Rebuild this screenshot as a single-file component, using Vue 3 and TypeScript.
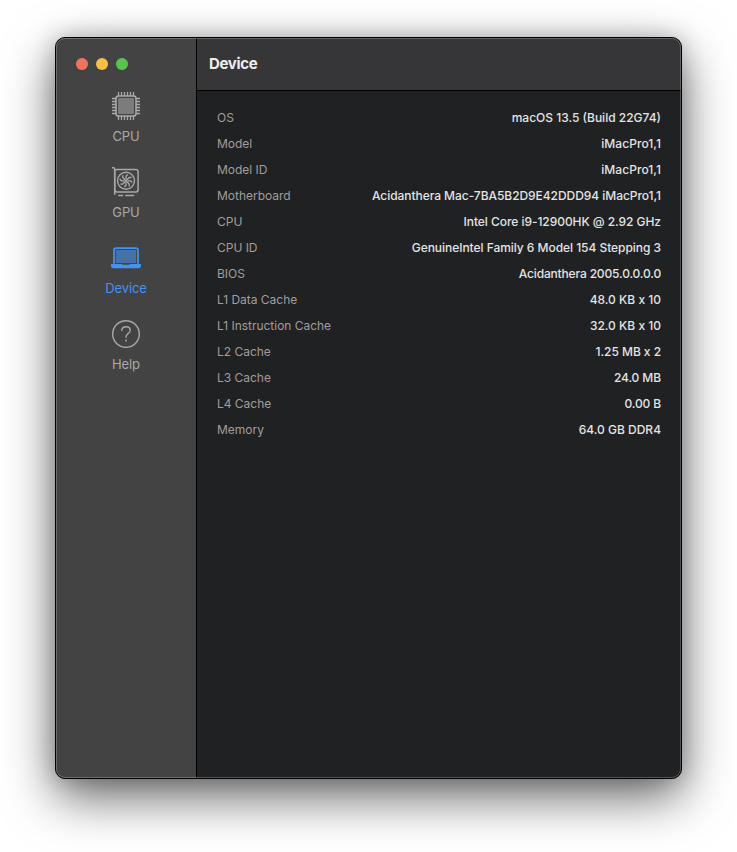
<script setup lang="ts">
interface InfoRow {
  label: string
  value: string
  tracking: number
}
type IconName = 'cpu' | 'gpu' | 'device' | 'help'
interface NavItem {
  icon: IconName
  label: string
}

const nav: NavItem[] = [
  { icon: 'cpu', label: 'CPU' },
  { icon: 'gpu', label: 'GPU' },
  { icon: 'device', label: 'Device' },
  { icon: 'help', label: 'Help' },
]
const active: IconName = 'device'

const rows: InfoRow[] = [
  { label: 'OS', value: 'macOS 13.5 (Build 22G74)', tracking: 0 },
  { label: 'Model', value: 'iMacPro1,1', tracking: 0.05 },
  { label: 'Model ID', value: 'iMacPro1,1', tracking: 0.05 },
  { label: 'Motherboard', value: 'Acidanthera Mac-7BA5B2D9E42DDD94 iMacPro1,1', tracking: -0.05 },
  { label: 'CPU', value: 'Intel Core i9-12900HK @ 2.92 GHz', tracking: -0.05 },
  { label: 'CPU ID', value: 'GenuineIntel Family 6 Model 154 Stepping 3', tracking: -0.045 },
  { label: 'BIOS', value: 'Acidanthera 2005.0.0.0.0', tracking: -0.16 },
  { label: 'L1 Data Cache', value: '48.0 KB x 10', tracking: 0 },
  { label: 'L1 Instruction Cache', value: '32.0 KB x 10', tracking: 0 },
  { label: 'L2 Cache', value: '1.25 MB x 2', tracking: -0.05 },
  { label: 'L3 Cache', value: '24.0 MB', tracking: -0.1 },
  { label: 'L4 Cache', value: '0.00 B', tracking: -0.12 },
  { label: 'Memory', value: '64.0 GB DDR4', tracking: 0 },
]

const pins: number[] = [9.5, 12.5, 15.5, 18.5, 21.5, 24.5]
const blades: number[] = [0, 45, 90, 135, 180, 225, 270, 315]
</script>

<template>
  <div class="desktop">
    <main class="window">
      <aside class="sidebar">
        <div class="lights">
          <span class="light close"></span>
          <span class="light minimize"></span>
          <span class="light zoom"></span>
        </div>
        <nav class="nav">
          <a v-for="item in nav" :key="item.icon" class="item" :class="{ active: item.icon === active }">
            <svg class="icon" viewBox="0 0 34 34" width="34" height="34" fill="none" stroke="currentColor">
              <g v-if="item.icon === 'cpu'">
                <g stroke-width="1.3">
                  <path v-for="p in pins.slice(0, 6)" :key="p" :d="`M3 ${p}h4M27 ${p}h4`" />
                  <path v-for="p in pins" :key="`v${p}`" :d="`M${p} 3v4M${p} 27v4`" />
                </g>
                <rect x="7" y="7" width="20" height="20" rx="2.6" stroke-width="1.6" />
                <rect x="9" y="9" width="16" height="16" rx=".8" fill="#7c7c7e" stroke="none" />
              </g>
              <g v-else-if="item.icon === 'gpu'" stroke-width="1.5">
                <path d="M3 2.8h1.4q1.3 0 1.3 1.3v25.6" />
                <rect x="5.7" y="4.5" width="23.4" height="22.4" rx="2.2" />
                <circle cx="17" cy="15.8" r="8.5" stroke-width="1.4" />
                <circle cx="17" cy="15.8" r="1.3" fill="currentColor" stroke="none" />
                <path
                  v-for="b in blades"
                  :key="b"
                  d="M17 14.4v-3.2l1.7-1.7"
                  stroke-width="1.35"
                  :transform="`rotate(${b} 17 15.8)`"
                />
                <path d="M9.2 30.4h5M16.4 30.4h8.8" stroke-width="1.5" />
              </g>
              <g v-else-if="item.icon === 'device'">
                <path d="M5 22.8V9.2a2 2 0 0 1 2-2h20a2 2 0 0 1 2 2v13.6" stroke-width="1.7" />
                <rect x="6.8" y="8.9" width="20.4" height="13.2" rx=".5" fill="#4770a6" stroke="none" />
                <path
                  d="M2 23h10.8q.2.7 1 .7h6.4q.8 0 1-.7H32v1.5q0 2.7-2.8 2.7H4.8Q2 27.2 2 24.5z"
                  fill="currentColor"
                  stroke="none"
                />
              </g>
              <g v-else stroke-width="1.4" stroke-linecap="round">
                <circle cx="17" cy="17" r="13.3" />
                <path d="M12.8 13.5c.1-2.4 1.8-3.8 4.2-3.8s4.2 1.5 4.2 3.6c0 1.5-.8 2.4-2.1 3.3-1.5 1-2 1.7-2 3v.6" />
                <circle cx="17" cy="23.6" r="1" fill="currentColor" stroke="none" />
              </g>
            </svg>
            <span class="caption">{{ item.label }}</span>
          </a>
        </nav>
      </aside>
      <section class="content">
        <header class="titlebar"><h1 class="title">Device</h1></header>
        <dl class="info">
          <div v-for="row in rows" :key="row.label" class="row">
            <dt class="label">{{ row.label }}</dt>
            <dd class="value" :style="{ letterSpacing: `${row.tracking}px` }">{{ row.value }}</dd>
          </div>
        </dl>
      </section>
    </main>
  </div>
</template>

<style>
body {
  background: #fff;
}
</style>

<style scoped>
.desktop {
  box-sizing: border-box;
  width: 737px;
  height: 852px;
  padding: 37px 55px 73px;
  overflow: hidden;
  background: #fff;
  font-family: Inter, "Liberation Sans", sans-serif;
}
.window {
  position: relative;
  box-sizing: border-box;
  display: flex;
  width: 627px;
  height: 742px;
  border: 1px solid #000;
  border-radius: 10px;
  background: #202123;
  box-shadow: 0 18px 50px rgba(0, 0, 0, .6), 0 0 22px rgba(0, 0, 0, .2);
}
.window::after {
  content: "";
  position: absolute;
  inset: 0;
  border: 1px solid rgba(255, 255, 255, .23);
  border-radius: 9px;
  pointer-events: none;
}
.sidebar {
  width: 140px;
  flex: none;
  border-right: 1px solid #000;
  border-radius: 9px 0 0 9px;
  background: #434343;
}
.lights {
  display: flex;
  gap: 8px;
  padding: 20px 0 0 20px;
}
.light {
  width: 12px;
  height: 12px;
  border-radius: 50%;
}
.close { background: #f2735c; }
.minimize { background: #f8c044; }
.zoom { background: #58c44c; }
.nav {
  display: flex;
  flex-direction: column;
  padding-top: 19px;
}
.item {
  display: flex;
  flex-direction: column;
  align-items: center;
  height: 76px;
  color: #a9a9a9;
}
.item.active { color: #4493f2; }
.icon { display: block; }
.caption {
  margin-top: 5px;
  font-size: 13px;
  letter-spacing: -.1px;
  line-height: 17px;
}
.content {
  flex: 1;
  min-width: 0;
}
.titlebar {
  display: flex;
  align-items: center;
  box-sizing: border-box;
  height: 53px;
  padding-left: 12px;
  border-bottom: 1px solid #000;
  border-top-right-radius: 9px;
  background: #363638;
}
.title {
  margin: 0;
  color: #ededed;
  font-size: 15px;
  font-weight: 700;
  letter-spacing: -.35px;
  line-height: 20px;
}
.info {
  margin: 0;
  padding: 14px 20px;
}
.row {
  display: flex;
  justify-content: space-between;
  height: 26px;
  font-size: 12px;
  line-height: 26px;
  white-space: nowrap;
}
.label {
  color: #a29d9b;
  letter-spacing: -.02px;
}
.value {
  margin: 0;
  color: #e4e4e4;
  font-weight: 500;
}
</style>
